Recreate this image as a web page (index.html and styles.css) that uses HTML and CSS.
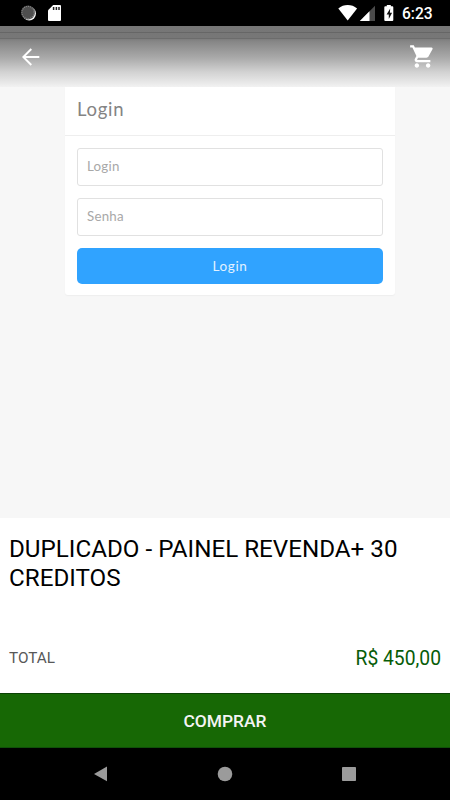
FILE: index.html
```html
<!DOCTYPE html>
<html lang="pt-BR">
<head>
<meta charset="utf-8">
<title>Produto</title>
<link rel="stylesheet" href="styles.css">
</head>
<body>
<div class="screen">
  <header class="status">
    <svg class="status-icons" width="64" height="26" viewBox="0 0 64 26">
      <circle cx="9.2" cy="13.6" r="6.8" fill="#f4f4f4"/>
      <circle cx="8" cy="12.5" r="6.9" fill="#4e4e4e"/>
      <circle cx="8" cy="12.5" r="6.1" fill="none" stroke="#858585" stroke-width="1.2" stroke-dasharray="1 1"/>
      <path d="M33.2 5H40q1 0 1 1v14q0 1-1 1H29q-1 0-1-1V10.2z" fill="#fff"/>
      <path d="M33.6 7v3M36.4 7v3M39 7v3" stroke="#222" stroke-width="1.5"/>
    </svg>
    <svg class="status-icons" width="62" height="26" viewBox="0 0 62 26">
      <path d="M.3 8.4C5.7 3.9 13.700 3.900 19.100 8.400L9.700 20.600z" fill="#fff"/>
      <path d="M37 5.800V21H21.800z" fill="#4b4b4b"/>
      <path d="M31.500 11.300V21H21.800z" fill="#fff"/>
      <path d="M48.800 5h4v1.200h1.500q1 0 1 1V20q0 1-1 1h-7q-1 0-1-1V7.200q0-1 1-1h1.500z" fill="#fff"/>
      <path d="M52.200 8.500l-3.600 6h2.200V19l3.300-6.200h-2.200z" fill="#111"/>
    </svg>
    <span class="clock">6:23</span>
  </header>

  <main class="photo">
    <nav class="toolbar">
      <svg width="18" height="18" viewBox="0 0 18 18" fill="none" stroke="#fff" stroke-width="1.900"><path d="M17.300 9H1.600M9.300 1L1.300 9l8 8"/></svg>
      <svg class="cart" width="27" height="27" viewBox="0 0 24 24" fill="#fff"><path d="M7 18c-1.100 0-1.990.9-1.990 2S5.900 22 7 22s2-.9 2-2-.9-2-2-2zM1 2v2h2l3.600 7.590-1.350 2.450c-.16.28-.25.61-.25.96 0 1.100.9 2 2 2h12v-2H7.420c-.14 0-.25-.11-.25-.25l.03-.12.900-1.630h7.450c.75 0 1.410-.41 1.750-1.030l3.580-6.490A1 1 0 0 0 20 4H5.210l-.94-2H1zm16 16c-1.100 0-1.990.9-1.990 2s.89 2 1.990 2 2-.9 2-2-.9-2-2-2z"/></svg>
    </nav>
    <section class="card">
      <h2 class="card-title">Login</h2>
      <div class="card-body">
        <div class="field">Login</div>
        <div class="field">Senha</div>
        <div class="login-button">Login</div>
      </div>
    </section>
  </main>

  <section class="details">
    <h1 class="product">DUPLICADO - PAINEL REVENDA+ 30 CREDITOS</h1>
    <div class="total">
      <span class="total-label">TOTAL</span>
      <span class="price">R$ 450,00</span>
    </div>
  </section>
  <div class="buy">COMPRAR</div>

  <footer class="navbar">
    <svg width="14" height="16" viewBox="0 0 14 16" fill="#9b9b9b"><path d="M13 .4V15.300L0 7.900z"/></svg>
    <svg width="16" height="16" viewBox="0 0 16 16" fill="#9b9b9b"><circle cx="8" cy="8" r="7.300"/></svg>
    <svg width="14" height="14" viewBox="0 0 14 14" fill="#9b9b9b"><rect width="14" height="14" rx=".8"/></svg>
  </footer>
</div>
</body>
</html>
```

FILE: styles.css
```css
* { box-sizing: border-box; }
body { margin: 0; font-family: Roboto, sans-serif; }
h1, h2 { margin: 0; font-weight: 400; }
svg { display: block; }

.screen {
  display: flex;
  flex-direction: column;
  width: 450px;
  height: 800px;
  overflow: hidden;
  background: #fff;
}

.status {
  display: flex;
  flex: none;
  align-items: center;
  height: 26px;
  padding: 0 17px 0 20px;
  background: #000;
  color: #fff;
}
.status-icons + .status-icons { margin-left: auto; }
.clock {
  width: 31px;
  margin-left: 2px;
  padding-top: 2px;
  font-size: 15.6px;
  font-weight: 500;
  line-height: 26px;
  white-space: nowrap;
}

.photo {
  flex: none;
  height: 492px;
  background: #f7f7f7;
}
.toolbar {
  display: flex;
  align-items: center;
  justify-content: space-between;
  height: 61px;
  padding: 0 14px 0 22px;
  background:
    linear-gradient(#666, #666) 0 6px / 100% 1px no-repeat,
    linear-gradient(#6c6c6c, #6c6c6c) 0 12px / 100% 1px no-repeat,
    linear-gradient(#767676 0, #777 12px, #858585 15px, #aaa 32px, #d2d2d2 46px, #e9e9e9 57px, #f2f2f2 61px);
}

.card {
  width: 330px;
  height: 208px;
  margin-left: 65px;
  background: #fff;
  border-radius: 0 0 3px 3px;
  box-shadow: 0 1px 1px #eee;
  font-family: Lato, sans-serif;
}
.card-title {
  height: 49px;
  padding-left: 12px;
  border-bottom: 1px solid #eee;
  color: #848484;
  font-size: 18.5px;
  line-height: 45px;
  letter-spacing: .7px;
}
.card-body {
  display: grid;
  gap: 12px;
  padding: 12px 12px 0;
}
.field {
  height: 38px;
  padding-left: 9px;
  border: 1px solid #e1e1e1;
  border-radius: 3px;
  color: #a8a8a8;
  font-size: 13.3px;
  line-height: 35px;
  letter-spacing: .25px;
}
.login-button {
  height: 36px;
  border-radius: 5px;
  background: #30a3ff;
  color: #e2f2ff;
  font-size: 13.5px;
  line-height: 37px;
  letter-spacing: .6px;
  text-align: center;
}

.details {
  display: flex;
  flex: none;
  flex-direction: column;
  justify-content: space-between;
  height: 175px;
  padding: 17px 9px 22px;
}
.product {
  color: #000;
  font-size: 24.2px;
  line-height: 28.500px;
}
.total {
  display: flex;
  align-items: center;
  justify-content: space-between;
  height: 26px;
}
.total-label { color: #585858; font-size: 15.300px; }
.price { color: #075c07; font-size: 19.300px; }

.buy {
  flex: none;
  height: 55px;
  border-top: 1px solid #0c4205;
  border-bottom: 1px solid #10500a;
  background: #176805;
  color: #f4f4f4;
  font-size: 17.400px;
  font-weight: 500;
  line-height: 54px;
  text-align: center;
}
.navbar {
  display: flex;
  flex: none;
  align-items: center;
  justify-content: space-between;
  height: 52px;
  padding: 0 94px;
  background: #000;
}
```
